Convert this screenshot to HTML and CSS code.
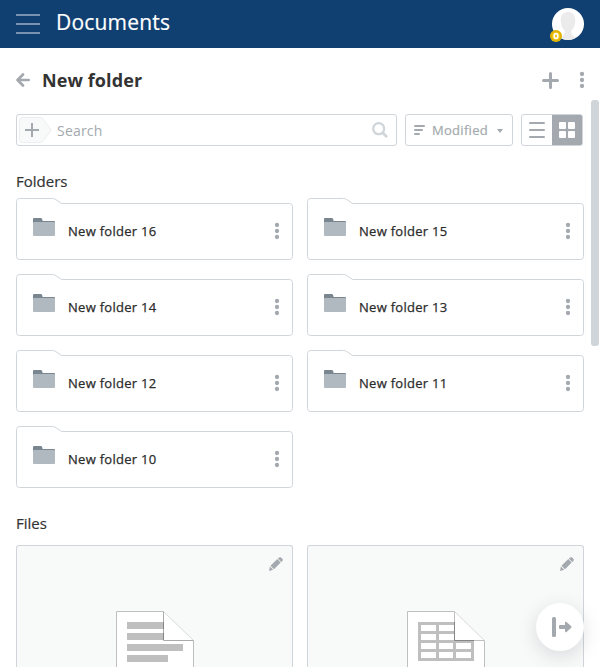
FILE: index.html
```html
<!DOCTYPE html>
<html lang="en">
<head>
<meta charset="utf-8">
<title>Documents</title>
<link rel="stylesheet" href="styles.css">
</head>
<body>
<svg width="0" height="0" class="defs" aria-hidden="true">
  <symbol id="outline" viewBox="0 0 277 62"><path d="M.5 3.500a3 3 0 0 1 3-3H36.500Q38.500.5 40 1.700L45.500 5.500H273.500a3 3 0 0 1 3 3V58.500a3 3 0 0 1-3 3H3.500a3 3 0 0 1-3-3Z" fill="#fff" stroke="#d0d5da"/></symbol>
  <symbol id="folder" viewBox="0 0 22 18"><path d="M0 1Q0 0 1 0H8Q9 0 9.300 1.500L9.600 3H21Q22 3 22 4V8H0Z" fill="#79858f"/><rect y="4" width="22" height="14" rx="1" fill="#b1b9c0"/></symbol>
  <symbol id="dots" viewBox="0 0 4 16" overflow="visible"><g fill="#a3a9ae"><circle cx="2" cy="2" r="2.150"/><circle cx="2" cy="8" r="2.150"/><circle cx="2" cy="14" r="2.150"/></g></symbol>
  <symbol id="pencil" viewBox="0 0 14 14"><g fill="#a3a9ae"><path d="M9.400.9Q10.500 0 11.600.2Q13.200 1 13.700 2.500Q13.900 3.500 13 4.400L12.300 5L8.900 1.500Z"/><path d="M8.300 2.100L11.700 5.600L5 12.200L1.500 8.800Z"/><path d="M.9 9.600L4.200 12.800L.1 13.900Z"/></g></symbol>
</svg>

<header class="topbar">
  <svg class="burger" width="24" height="20"><path d="M0 1H24M0 10H24M0 19H24" stroke="#7993af" stroke-width="2"/></svg>
  <h1>Documents</h1>
  <div class="avatar">
    <svg width="32" height="32" viewBox="0 0 32 32"><circle cx="16" cy="16" r="16" fill="#fff"/><path d="M16 4C11 4 8.700 7.500 8.700 12.500C8.700 17 10 20.500 12.700 22.500V25Q12 27.500 7.700 29.500A16 16 0 0 0 24.300 29.500Q20 27.500 19.300 25V22.500C22 20.500 23.300 17 23.300 12.500C23.300 7.500 21 4 16 4Z" fill="#ebebeb"/></svg>
    <svg class="badge" width="12" height="12"><circle cx="6" cy="6" r="6" fill="#edc409"/><circle cx="6" cy="6" r="5" fill="none" stroke="#cfa40c" stroke-width=".9"/><ellipse cx="6" cy="6" rx="1.900" ry="2.400" fill="none" stroke="#fff" stroke-width="1.600"/></svg>
  </div>
</header>

<main>
  <div class="titlebar">
    <svg width="14" height="14" fill="none" stroke="#a3a9ae" stroke-width="2.600" stroke-linecap="round" stroke-linejoin="round"><path d="M7 1.500L1.500 7L7 12.500M2 7H12.700"/></svg>
    <h2>New folder</h2>
    <svg class="add" width="17" height="17"><path d="M8.500 1.500V15.500M1.500 8.500H15.500" stroke="#a3a9ae" stroke-width="3" stroke-linecap="round"/></svg>
    <svg width="4" height="16" overflow="visible"><use href="#dots"/></svg>
  </div>

  <div class="tools">
    <div class="search">
      <svg width="33" height="26"><path d="M.5 3.500Q.5.500 3.500.500H21Q23 .5 24.500 2.500L32 13L24.500 23.500Q23 25.500 21 25.500H3.500Q.5 25.500.5 22.500Z" fill="#f8f9f9" stroke="#eceef1"/><path d="M13 6V20M6 13H20" stroke="#a3a9ae" stroke-width="2"/></svg>
      <span>Search</span>
      <svg width="16" height="16" fill="none" stroke="#d0d5da"><circle cx="6.700" cy="6.700" r="5.500" stroke-width="2.300"/><path d="M11 11L14.200 14.200" stroke-width="2.800" stroke-linecap="round"/></svg>
    </div>
    <div class="sort">
      <svg width="11" height="10"><path d="M1 1H10M1 5H8M1 9H5" stroke="#a3a9ae" stroke-width="2" stroke-linecap="round"/></svg>
      <span>Modified</span>
      <svg class="caret" width="6" height="4"><path d="M0 0H6L3 4Z" fill="#a3a9ae"/></svg>
    </div>
    <div class="views">
      <div class="view"><svg width="16" height="16"><path d="M1 1H15M1 8H15M1 15H15" stroke="#a3a9ae" stroke-width="2" stroke-linecap="round"/></svg></div>
      <div class="view active"><svg width="16" height="16" fill="#fff"><rect width="7" height="7" rx="1"/><rect x="9" width="7" height="7" rx="1"/><rect y="9" width="7" height="7" rx="1"/><rect x="9" y="9" width="7" height="7" rx="1"/></svg></div>
    </div>
  </div>

  <h3>Folders</h3>
  <div class="grid">
    <div class="folder"><svg class="edge"><use href="#outline"/></svg><svg class="icon"><use href="#folder"/></svg><span>New folder 16</span><svg class="menu"><use href="#dots"/></svg></div>
    <div class="folder"><svg class="edge"><use href="#outline"/></svg><svg class="icon"><use href="#folder"/></svg><span>New folder 15</span><svg class="menu"><use href="#dots"/></svg></div>
    <div class="folder"><svg class="edge"><use href="#outline"/></svg><svg class="icon"><use href="#folder"/></svg><span>New folder 14</span><svg class="menu"><use href="#dots"/></svg></div>
    <div class="folder"><svg class="edge"><use href="#outline"/></svg><svg class="icon"><use href="#folder"/></svg><span>New folder 13</span><svg class="menu"><use href="#dots"/></svg></div>
    <div class="folder"><svg class="edge"><use href="#outline"/></svg><svg class="icon"><use href="#folder"/></svg><span>New folder 12</span><svg class="menu"><use href="#dots"/></svg></div>
    <div class="folder"><svg class="edge"><use href="#outline"/></svg><svg class="icon"><use href="#folder"/></svg><span>New folder 11</span><svg class="menu"><use href="#dots"/></svg></div>
    <div class="folder"><svg class="edge"><use href="#outline"/></svg><svg class="icon"><use href="#folder"/></svg><span>New folder 10</span><svg class="menu"><use href="#dots"/></svg></div>
  </div>

  <h3 class="files-title">Files</h3>
  <div class="grid">
    <div class="file">
      <svg class="edit"><use href="#pencil"/></svg>
      <svg class="sheet" viewBox="0 0 78 56"><path d="M.5 .5H47.500L77.500 29.500V56H.5Z" fill="#fff"/><path d="M47.500.5H.5V56M77.500 56V29.500" fill="none" stroke="#bfbfbf"/><path d="M11 11H47.500V18H11ZM11 22H47.500V29H11ZM11 33H67V40H11ZM11 44H52V51H11Z" fill="#bfbfbf"/><path d="M47.500.5L77.500 29.500" stroke="#d9dada"/><path d="M47.500.5V29.500H77.500" fill="none" stroke="#aaa"/><path d="M47.500 11V18M47.500 22V29" stroke="#858585"/></svg>
    </div>
    <div class="file">
      <svg class="edit"><use href="#pencil"/></svg>
      <svg class="sheet" viewBox="0 0 78 56"><path d="M.5 .5H47.500L77.500 29.500V56H.5Z" fill="#fff"/><path d="M47.500.5H.5V56M77.500 56V29.500" fill="none" stroke="#bfbfbf"/><path d="M11 11H47.500V29.500H67V50H11Z" fill="#bfbfbf"/><path d="M14 14H29V20H14ZM32 14H47V20H32ZM14 23H29V29H14ZM32 23H47V29H32ZM14 32H29V38H14ZM32 32H46V38H32ZM49 32H64V38H49ZM14 41H29V47H14ZM32 41H46V47H32ZM49 41H64V47H49Z" fill="#fff"/><path d="M47.500.5L77.500 29.500" stroke="#d9dada"/><path d="M47.500.5V29.500H77.500" fill="none" stroke="#bfbfbf"/><path d="M47.500 11V29.500H67" fill="none" stroke="#858585"/></svg>
    </div>
  </div>
</main>
<div class="scrollbar"></div>
<div class="fab"><svg width="20" height="20"><rect width="4" height="20" rx="1.500" fill="#a3a9ae"/><path d="M8 8H13V6Q13 4 14.500 5L19 9Q20 10 19 11L14.500 15Q13 16 13 14V12H8Q7 12 7 11V9Q7 8 8 8Z" fill="#a3a9ae"/></svg></div>
</body>
</html>
```
FILE: styles.css
```css
* { box-sizing: border-box; }
body {
  margin: 0;
  height: 667px;
  overflow: hidden;
  position: relative;
  background: #fff;
  color: #333;
  font-family: "Open Sans", sans-serif;
}
svg { display: block; flex: none; }
.defs { position: absolute; }
h1, h2, h3 { margin: 0; }

.topbar {
  display: flex;
  align-items: center;
  height: 48px;
  padding: 0 16px;
  background: #0f4071;
}
.topbar h1 {
  margin-left: 16px;
  padding-bottom: 4px;
  color: #fff;
  font-size: 21px;
  font-weight: 400;
  letter-spacing: .2px;
  -webkit-text-stroke: .2px;
  line-height: 28px;
}
.avatar { position: relative; margin-left: auto; }
.badge { position: absolute; left: -2px; bottom: -2px; }

main { padding: 0 17px 0 16px; }
.titlebar {
  display: flex;
  align-items: center;
  height: 64px;
}
.titlebar h2 {
  margin-left: 12px;
  font-size: 18px;
  line-height: 24px;
  font-weight: 700;
  letter-spacing: .1px;
}
.add { margin: 0 21px 0 auto; }
.titlebar svg:last-child { margin-right: -1px; }

.tools { display: flex; gap: 8px; height: 32px; margin-top: 2px; }
.search, .sort, .views {
  display: flex;
  align-items: center;
  border: 1px solid #d0d5da;
  border-radius: 3px;
  color: #a3a9ae;
}
.search { width: 381px; padding: 0 8px 0 2px; font-size: 14px; letter-spacing: .2px; }
.search span { flex: 1; margin-left: 5px; }
.sort { width: 108px; padding: 0 9px 0 8px; font-size: 13px; letter-spacing: .3px; -webkit-text-stroke: .2px; }
.sort span { flex: 1; margin-left: 7px; }
.caret { margin-top: 2px; }
.views { width: 62px; overflow: hidden; }
.view { flex: none; width: 30px; height: 30px; display: grid; place-items: center; }
.active { width: 29px; margin-left: 1px; padding-right: 2px; background: #a3a9ae; box-shadow: 0 0 0 1px #a3a9ae; }

h3 {
  margin: 25px 0 7px;
  font-size: 15px;
  line-height: 20px;
  font-weight: 400;
  -webkit-text-stroke: .2px;
}
.grid {
  display: grid;
  grid-template-columns: 277px 277px;
  gap: 14px;
}
.folder {
  position: relative;
  display: flex;
  align-items: center;
  height: 62px;
  padding: 4px 14px 0 17px;
  font-size: 13px;
  letter-spacing: .28px;
  -webkit-text-stroke: .25px;
  color: #2b2b2b;
}
.edge { position: absolute; inset: 0; width: 277px; height: 62px; }
.icon { position: relative; width: 22px; height: 18px; margin-bottom: 8px; }
.folder span { position: relative; flex: 1; margin-left: 13px; }
.menu { position: relative; width: 4px; height: 16px; overflow: visible; }

h3.files-title { margin: 25px 0 12px; }
.file {
  position: relative;
  height: 122px;
  padding-top: 65px;
  border: 1px solid #d0d5da;
  border-bottom: 0;
  border-radius: 3px 3px 0 0;
  background: #f8f9f9;
}
.sheet { width: 78px; height: 56px; margin-left: 99px; }
.edit { position: absolute; top: 11px; right: 9px; width: 14px; height: 14px; }

.scrollbar {
  position: absolute;
  top: 100px;
  right: 1px;
  width: 8px;
  height: 246px;
  border-radius: 3px;
  background: #d0d5da;
}
.fab {
  position: absolute;
  left: 536px;
  top: 603px;
  width: 48px;
  height: 48px;
  padding-left: 4px;
  display: grid;
  place-items: center;
  border-radius: 50%;
  background: #fff;
  box-shadow: 0 5px 20px rgba(4, 15, 27, .13);
}
```
